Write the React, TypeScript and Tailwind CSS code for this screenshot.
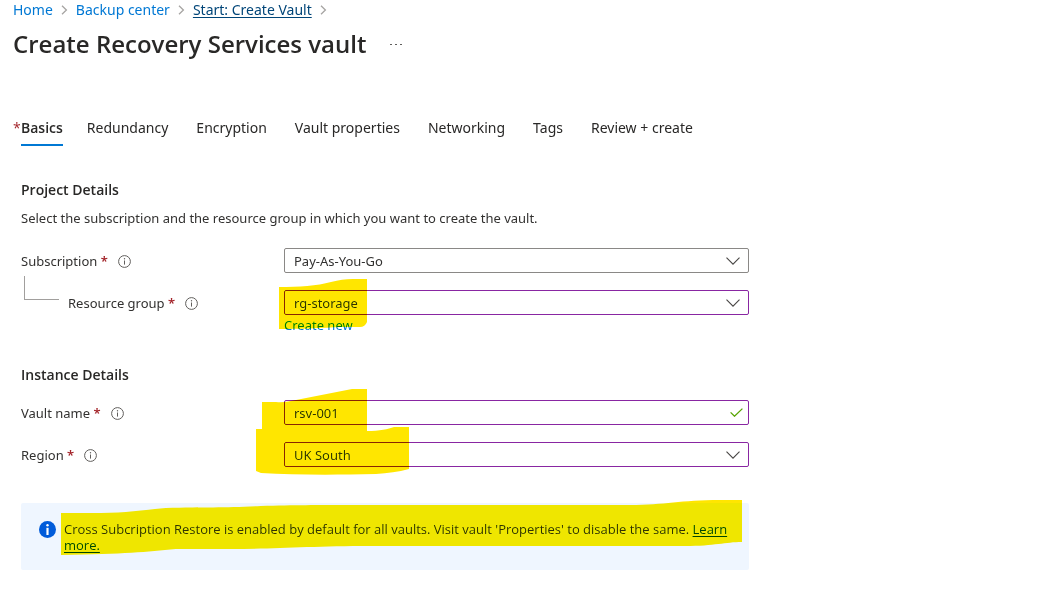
import type { ReactNode } from "react";

function InfoIcon() {
  return (
    <svg className="ml-[10px] h-[13px] w-[13px] shrink-0" viewBox="0 0 13 13" fill="none" aria-hidden="true">
      <circle cx="6.5" cy="6.5" r="5.9" stroke="#605e5c" strokeWidth="1" />
      <path d="M6.5 5.5V9.6" stroke="#605e5c" strokeWidth="1" />
      <circle cx="6.5" cy="3.8" r="0.7" fill="#605e5c" />
    </svg>
  );
}

function Crumb() {
  return (
    <svg className="h-[10px] w-[7px] shrink-0" viewBox="0 0 7 10" fill="none" aria-hidden="true">
      <path d="M1 0.7L5.4 5L1 9.3" stroke="#a6a4a2" strokeWidth="1.3" />
    </svg>
  );
}

function Chevron() {
  return (
    <svg className="pointer-events-none absolute top-[9px] right-[9px] h-2 w-[14px]" viewBox="0 0 14 8" fill="none" aria-hidden="true">
      <path d="M0.5 0.6L7 7.1L13.5 0.6" stroke="#484644" strokeWidth="1.1" />
    </svg>
  );
}

function Highlight({ className, viewBox, d }: { className: string; viewBox: string; d: string }) {
  return (
    <svg
      className={`pointer-events-none absolute z-10 mix-blend-darken ${className}`}
      viewBox={viewBox}
      preserveAspectRatio="none"
      aria-hidden="true"
    >
      <path d={d} fill="#ffe600" />
    </svg>
  );
}

function Row({ id, label, nested, children }: { id: string; label: string; nested?: boolean; children: ReactNode }) {
  return (
    <div className="flex items-start">
      <div className={`relative flex h-[26px] w-[263px] shrink-0 items-center ${nested ? "pl-[47px]" : ""}`}>
        {nested && (
          <span className="absolute -top-[14px] left-[3px] h-6 w-[35px] border-b border-l border-[#a19f9d]" />
        )}
        <label htmlFor={id}>
          {label} <span className="font-semibold text-[#a4262c]">*</span>
        </label>
        <InfoIcon />
      </div>
      <div className="relative min-w-0 flex-1">{children}</div>
    </div>
  );
}

function Select({ id, value, border }: { id: string; value: string; border: string }) {
  return (
    <>
      <select
        id={id}
        defaultValue={value}
        className={`block h-[25px] w-full appearance-none rounded-[2px] border bg-white pr-8 pl-[9px] text-[13px] leading-5 text-[#323130] ${border}`}
      >
        <option>{value}</option>
      </select>
      <Chevron />
    </>
  );
}

const tabs = ["Basics", "Redundancy", "Encryption", "Vault properties", "Networking", "Tags", "Review + create"];

export default function App() {
  return (
    <div className="bg-white pb-[22px] font-['Noto_Sans','Open_Sans',sans-serif] text-[13px] leading-5 text-[#323130]">
      <nav aria-label="Breadcrumb" className="flex items-center gap-2 pl-[13px] text-[14px] text-[#0078d4]">
        <a href="#home">Home</a>
        <Crumb />
        <a href="#backup">Backup center</a>
        <Crumb />
        <a href="#start" className="text-[#004578] underline underline-offset-2">Start: Create Vault</a>
        <Crumb />
      </nav>

      <header className="mt-2 flex items-center gap-6 pl-[13px]">
        <h1 className="font-['Open_Sans',sans-serif] text-[24px] leading-8 font-semibold text-[#292827]">
          Create Recovery Services vault
        </h1>
        <button type="button" aria-label="More actions" className="flex h-5 items-center gap-[3px]">
          <span className="h-px w-[2px] bg-[#605e5c]" />
          <span className="h-px w-[2px] bg-[#605e5c]" />
          <span className="h-px w-[2px] bg-[#605e5c]" />
        </button>
      </header>

      <main className="w-full max-w-[749px] pl-[21px]">
        <div role="tablist" className="mt-[58px] flex gap-7 text-[14px] text-[#292827]">
          {tabs.map((tab, i) => (
            <button
              key={tab}
              type="button"
              role="tab"
              aria-selected={i === 0}
              className={
                i === 0
                  ? "relative -mr-1 h-7 border-b-2 border-[#0078d4] pb-[6px] font-['Open_Sans',sans-serif] font-semibold whitespace-nowrap"
                  : "h-7 pb-2 whitespace-nowrap"
              }
            >
              {i === 0 && <span className="absolute top-0 -left-2 font-normal text-[#a4262c]">*</span>}
              {tab}
            </button>
          ))}
        </div>

        <section>
          <h2 className="mt-[34px] font-['Open_Sans',sans-serif] text-[14px] font-semibold text-[#292827]">Project Details</h2>
          <p className="mt-2">Select the subscription and the resource group in which you want to create the vault.</p>
          <div className="mt-5 flex flex-col gap-4">
            <Row id="subscription" label="Subscription">
              <Select id="subscription" value="Pay-As-You-Go" border="border-[#8a8886]" />
            </Row>
            <Row id="group" label="Resource group" nested>
              <Select id="group" value="rg-storage" border="border-[#8926a2]" />
              <a href="#new" className="inline-block text-[#0078d4]">Create new</a>
              <Highlight
                className="-top-[11px] -left-[5px] h-[50px] w-[88px]"
                viewBox="0 0 88 50"
                d="M0 8C20 8 38 7 52 3C60 1 66 0 74 0H88V43C87 46 84 48 81 48H62C44 49 20 50 0 50Z"
              />
            </Row>
          </div>
        </section>

        <section>
          <h2 className="mt-[30px] font-['Open_Sans',sans-serif] text-[14px] font-semibold text-[#292827]">Instance Details</h2>
          <div className="mt-[15px] flex flex-col gap-4">
            <Row id="vault" label="Vault name">
              <input
                id="vault"
                type="text"
                defaultValue="rsv-001"
                className="block h-[25px] w-full rounded-[2px] border border-[#8926a2] bg-white pr-8 pl-[9px]"
              />
              <svg className="absolute top-2 right-[6px] h-[9px] w-[13px]" viewBox="0 0 13 9" fill="none" aria-hidden="true">
                <path d="M0.6 4.4L4.5 8.2L12.4 0.6" stroke="#57a300" strokeWidth="1.3" />
              </svg>
              <Highlight
                className="-top-[11px] -left-[28px] h-[86px] w-[153px]"
                viewBox="0 0 153 86"
                d="M6 13H20C28 14 33 12 40 11L96 0H111V42C124 42 132 40 138 38H153V80C142 83 132 84 120 85C78 86 38 86 5 84L0 82V40H6Z"
              />
            </Row>
            <Row id="region" label="Region">
              <Select id="region" value="UK South" border="border-[#8926a2]" />
            </Row>
          </div>
        </section>

        <aside className="relative mt-[35px] flex items-start gap-2 rounded-[2px] bg-[#eff6ff] px-[18px] pt-[18px] pb-[17px]">
          <svg className="h-[17px] w-[17px] shrink-0" viewBox="0 0 17 17" aria-hidden="true">
            <circle cx="8.5" cy="8.5" r="8.5" fill="#015cda" />
            <circle cx="8.5" cy="4.3" r="1.2" fill="#fff" />
            <path d="M7.4 6.8H9.6V14H7.4Z" fill="#fff" />
          </svg>
          <p className="font-['Open_Sans',sans-serif] text-[13px] leading-4">
            Cross Subcription Restore is enabled by default for all vaults. Visit vault 'Properties' to disable the same.{" "}
            <a href="#learn" className="text-[#004578] underline underline-offset-2">Learn more.</a>
          </p>
          <Highlight
            className="-top-[3px] left-[40px] h-[55px] w-[681px]"
            viewBox="0 0 682 55"
            d="M0 13H40C65 13 80 10 105 8C145 7 165 8 200 6C235 5 255 5 290 5H570C605 5 620 0 660 0H682V42C665 42 655 46 625 46H310C250 46 215 49 170 49H115C85 52 65 54 0 55Z"
          />
        </aside>
      </main>
    </div>
  );
}
